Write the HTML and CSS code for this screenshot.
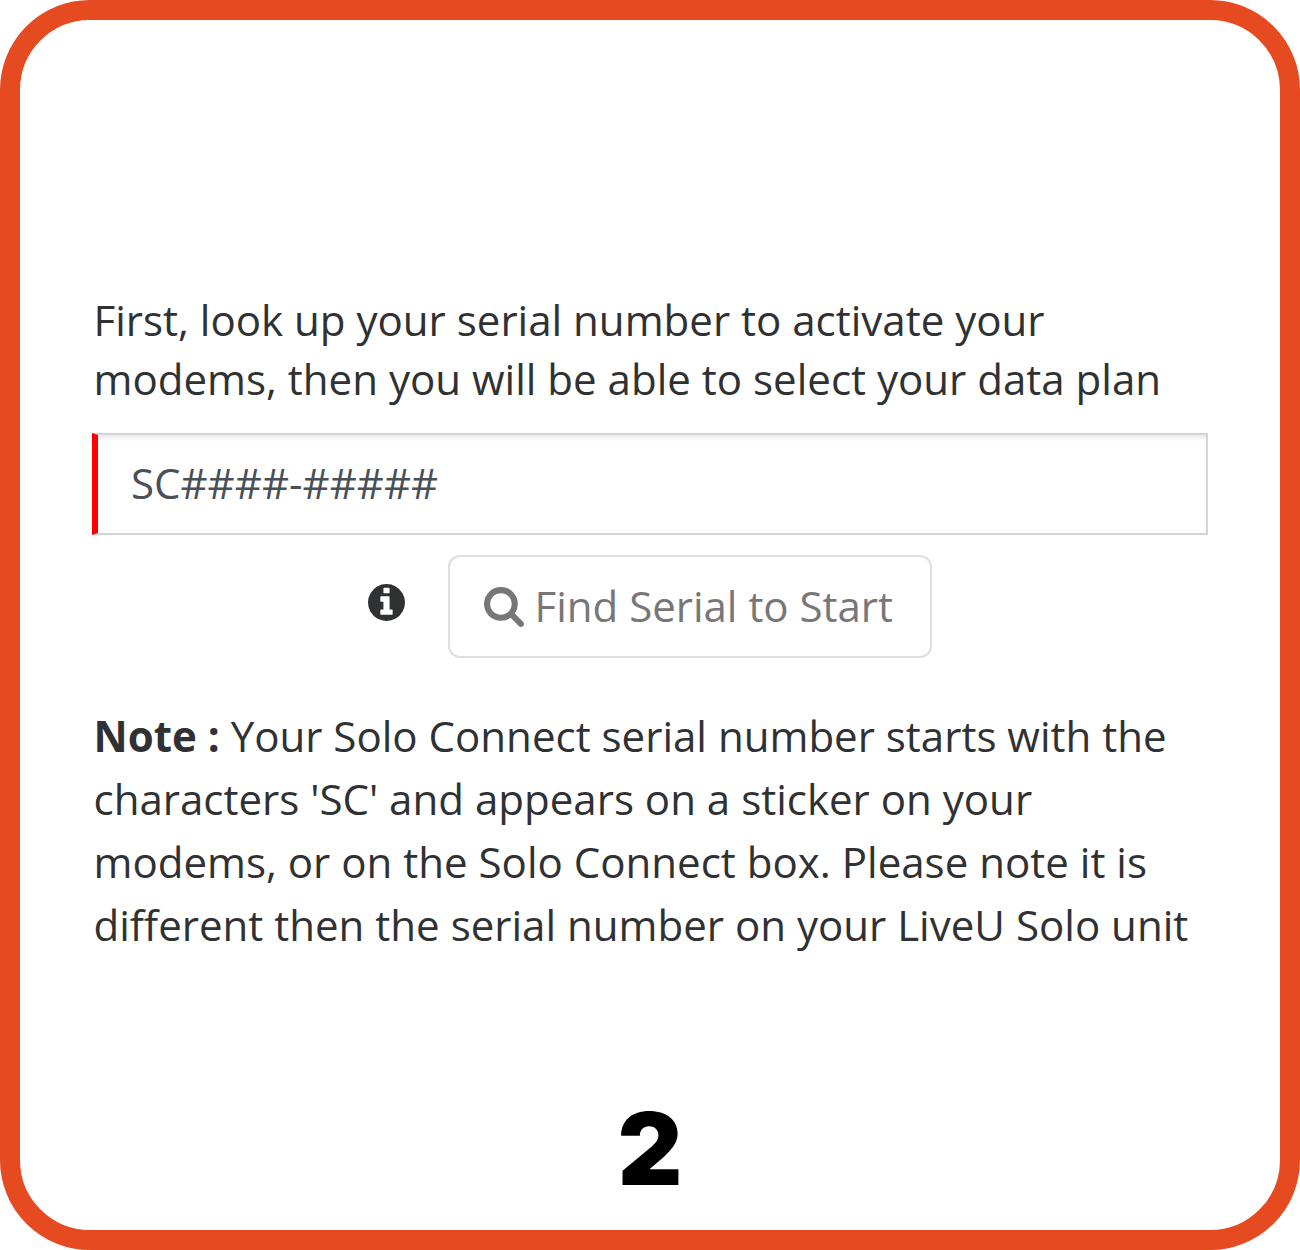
FILE: index.html
```html
<!DOCTYPE html>
<html lang="en">
<head>
<meta charset="utf-8">
<title>Activate your modems</title>
<link rel="stylesheet" href="styles.css">
</head>
<body>
<main class="card">
  <p class="intro">First, look up your serial number to activate your<br>modems, then you will be able to select your data plan</p>
  <input class="serial" type="text" placeholder="SC####-#####" aria-label="Serial number">
  <div class="actions">
    <svg class="info" viewBox="128 128 1536 1536" aria-hidden="true"><path fill="currentColor" d="M1152 1376v-160q0-14-9-23t-23-9h-96v-512q0-14-9-23t-23-9h-320q-14 0-23 9t-9 23v160q0 14 9 23t23 9h96v320h-96q-14 0-23 9t-9 23v160q0 14 9 23t23 9h448q14 0 23-9t9-23zm-128-896v-160q0-14-9-23t-23-9h-192q-14 0-23 9t-9 23v160q0 14 9 23t23 9h192q14 0 23-9t9-23zm640 416q0 209-103 385.500t-279.500 279.500-385.500 103-385.500-103-279.500-279.500-103-385.500 103-385.500 279.500-279.500 385.500-103 385.500 103 279.500 279.500 103 385.500z"/></svg>
    <button class="find" type="button">
      <svg class="search" viewBox="64 128 1664 1664" aria-hidden="true"><path fill="currentColor" d="M1216 832q0-185-131.500-316.500t-316.500-131.500-316.500 131.500-131.500 316.500 131.500 316.500 316.500 131.500 316.500-131.500 131.500-316.500zm512 832q0 52-38 90t-90 38q-54 0-90-38l-343-342q-179 124-399 124-143 0-273.500-55.500t-225-150-150-225-55.500-273.500 55.500-273.500 150-225 225-150 273.500-55.500 273.500 55.500 225 150 150 225 55.500 273.500q0 220-124 399l343 343q37 37 37 90z"/></svg>
      <span class="find-label">Find Serial to Start</span>
    </button>
  </div>
  <p class="note"><b>Note :</b> Your Solo Connect serial number starts with the<br>characters 'SC' and appears on a sticker on your<br>modems, or on the Solo Connect box. Please note it is<br>different then the serial number on your LiveU Solo unit</p>
  <div class="step">2</div>
</main>
</body>
</html>
```
FILE: styles.css
```css
* { box-sizing: border-box; }
body { margin: 0; background: #fff; font-family: "Open Sans", sans-serif; }
.card {
  width: 1300px;
  height: 1250px;
  border: 20px solid #e54a20;
  border-radius: 90px;
  padding: 270px 72px 0;
  color: #2f3133;
  font-size: 42.050px;
}
p { margin: 0; white-space: nowrap; }
.intro { line-height: 59px; margin-left: 1.500px; }
.serial {
  display: block;
  width: 1116px;
  height: 102px;
  margin: 25px 0 0;
  padding: 0 0 3px 33px;
  border: 2px solid #d0d5da;
  border-left: 6px solid #f00;
  box-shadow: inset 0 4px 4px -1px #e9e9eb;
  font: 42px "Open Sans", sans-serif;
}
.serial::placeholder { color: #495057; opacity: 1; }
.actions { display: flex; align-items: center; margin: 20px 0 0 276px; }
.info { width: 37px; height: 37px; margin: -8px 43px 0 0; }
.find {
  display: flex;
  align-items: center;
  width: 484px;
  height: 103px;
  padding: 0 0 0 34px;
  border: 2px solid #dedede;
  border-radius: 12px;
  background: #fff;
  color: #777;
  font: 42px "Open Sans", sans-serif;
}
.search { width: 40px; height: 40px; margin-right: 10.500px; }
.find-label { white-space: nowrap; padding-bottom: 3px; }
.note { margin: 46px 0 0 1.500px; line-height: 63px; }
.step {
  margin-top: 133px;
  text-align: center;
  color: #000;
  font: 900 100px/120px Inter, "Liberation Sans", sans-serif;
}
```
